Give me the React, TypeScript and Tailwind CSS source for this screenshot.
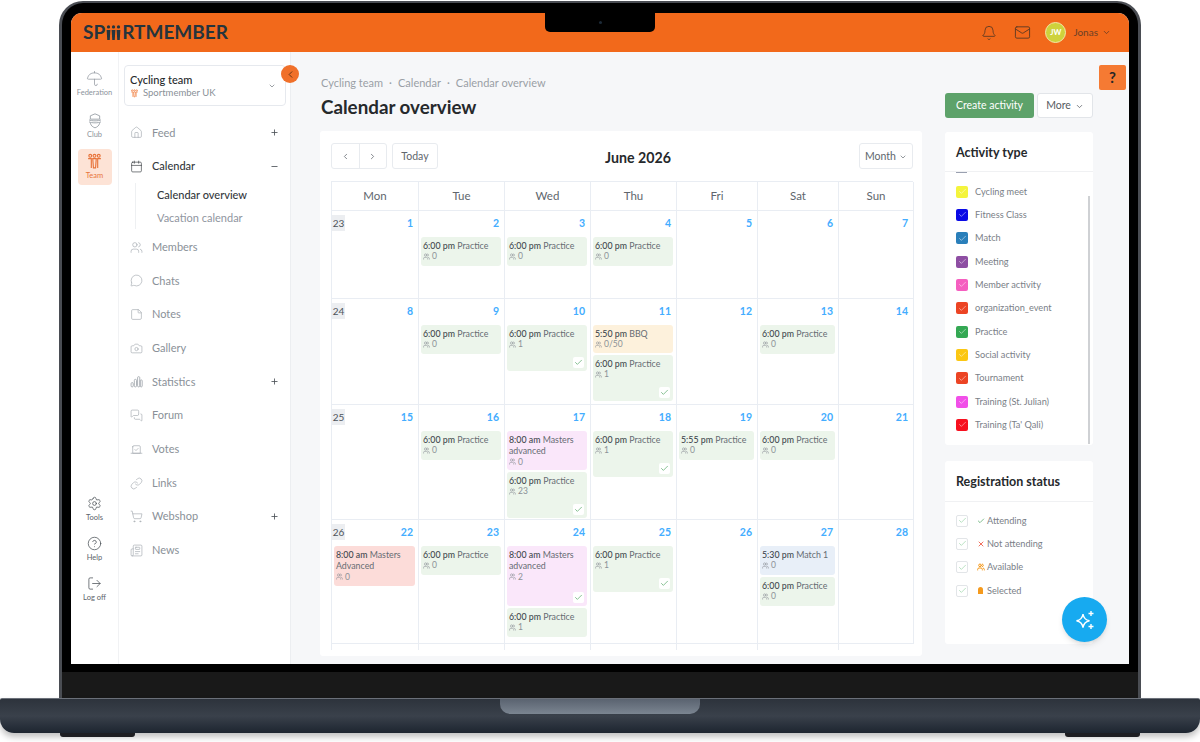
import {
  Bell, Mail, ChevronDown, ChevronLeft, ChevronRight, Plus, Minus, Home, Calendar, Users, MessageCircle,
  StickyNote, Camera, MessagesSquare, Vote, Link, ShoppingCart, Newspaper,
  Umbrella, Settings, CircleHelp, LogOut, Check, X,
} from 'lucide-react';

const Figures = ({ className }: { className?: string }) => (
  <svg viewBox="0 0 24 24" fill="none" stroke="currentColor" strokeWidth="1.6" className={className}>
    <circle cx="6" cy="4" r="2" /><circle cx="12" cy="4" r="2" /><circle cx="18" cy="4" r="2" />
    <path d="M3 8h4.500v13M21 8h-4.500v13M9.500 8h5l-1 13h-3z" />
  </svg>
);

const ClubIcon = ({ className }: { className?: string }) => (
  <svg viewBox="0 0 24 24" fill="none" stroke="currentColor" strokeWidth="1.200" className={className}>
    <path d="M12 2 5 5v5h14V5z" /><path d="M3 11c3 2 15 2 18 0M3 14c3 2 15 2 18 0" />
    <path d="M5 16c1 4 4 6 7 7 3-1 6-3 7-7" />
  </svg>
);

const StatsIcon = ({ className }: { className?: string }) => (
  <svg viewBox="0 0 24 24" fill="none" stroke="currentColor" strokeWidth="1.600" className={className}>
    <rect x="2" y="14" width="4" height="8" rx="2" /><rect x="8" y="8" width="4" height="14" rx="2" />
    <rect x="14" y="3" width="4" height="19" rx="2" /><rect x="19" y="9" width="3.500" height="13" rx="1.700" />
  </svg>
);

const Sparkle = () => (
  <svg viewBox="0 0 24 24" fill="none" stroke="white" strokeWidth="1.400" className="w-[24px] h-[24px]">
    <path d="M10 6c.6 4 2.400 6 6.500 6.800-4.100.8-5.900 2.800-6.500 6.800-.6-4-2.400-6-6.500-6.800C7.600 12 9.400 10 10 6z" />
    <path d="M18 3v5M15.500 5.500h5M18 16v5M15.500 18.500h5" />
  </svg>
);

const LogoMark = () => (
  <svg viewBox="0 0 24 24" className="w-[15px] h-[15px] mx-[1px] text-[#25343d]" fill="currentColor">
    <circle cx="4" cy="3" r="2.600" /><circle cx="12" cy="3" r="2.600" /><circle cx="20" cy="3" r="2.600" />
    <path d="M1 8h6l-1 16H2zM9 8h6l-1 16h-4zM17 8h6l-1 16h-4z" />
  </svg>
);

type NavItem = { label: string; icon: any; plus?: boolean };

const navTop: NavItem[] = [{ label: 'Feed', icon: Home, plus: true }];
const navRest: NavItem[] = [
  { label: 'Members', icon: Users },
  { label: 'Chats', icon: MessageCircle },
  { label: 'Notes', icon: StickyNote },
  { label: 'Gallery', icon: Camera },
  { label: 'Statistics', icon: StatsIcon, plus: true },
  { label: 'Forum', icon: MessagesSquare },
  { label: 'Votes', icon: Vote },
  { label: 'Links', icon: Link },
  { label: 'Webshop', icon: ShoppingCart, plus: true },
  { label: 'News', icon: Newspaper },
];

const activityTypes = [
  { label: 'Cycling meet', color: 'bg-[#f4f43c]' },
  { label: 'Fitness Class', color: 'bg-[#0a0ae6]' },
  { label: 'Match', color: 'bg-[#2a7fba]' },
  { label: 'Meeting', color: 'bg-[#8e4ea3]' },
  { label: 'Member activity', color: 'bg-[#f55fc0]' },
  { label: 'organization_event', color: 'bg-[#ec4424]' },
  { label: 'Practice', color: 'bg-[#34a853]' },
  { label: 'Social activity', color: 'bg-[#fbc713]' },
  { label: 'Tournament', color: 'bg-[#ec4424]' },
  { label: 'Training (St. Julian)', color: 'bg-[#f14fe8]' },
  { label: "Training (Ta' Qali)", color: 'bg-[#f7101f]' },
];

type Ev = { time: string; title: string; title2?: string; count: string; tone: string; h: string; done?: boolean };

const practice = (count: string, done?: boolean): Ev => ({
  time: '6:00 pm', title: 'Practice', count, tone: 'bg-[#ecf5eb]', h: done ? 'h-[46px]' : 'h-[29px]', done,
});

type Day = { d: number; evs?: Ev[] };
type Week = { wk: number; h: string; days: Day[] };

const weeks: Week[] = [
  {
    wk: 23, h: 'h-[88px]',
    days: [
      { d: 1 }, { d: 2, evs: [practice('0')] }, { d: 3, evs: [practice('0')] }, { d: 4, evs: [practice('0')] },
      { d: 5 }, { d: 6 }, { d: 7 },
    ],
  },
  {
    wk: 24, h: 'h-[106px]',
    days: [
      { d: 8 }, { d: 9, evs: [practice('0')] }, { d: 10, evs: [practice('1', true)] },
      { d: 11, evs: [{ time: '5:50 pm', title: 'BBQ', count: '0/50', tone: 'bg-[#fdf1dc]', h: 'h-[28px]' }, practice('1', true)] },
      { d: 12 }, { d: 13, evs: [practice('0')] }, { d: 14 },
    ],
  },
  {
    wk: 25, h: 'h-[115px]',
    days: [
      { d: 15 }, { d: 16, evs: [practice('0')] },
      { d: 17, evs: [{ time: '8:00 am', title: 'Masters', title2: 'advanced', count: '0', tone: 'bg-[#fae7fa]', h: 'h-[39px]' }, practice('23', true)] },
      { d: 18, evs: [practice('1', true)] },
      { d: 19, evs: [{ time: '5:55 pm', title: 'Practice', count: '0', tone: 'bg-[#ecf5eb]', h: 'h-[29px]' }] },
      { d: 20, evs: [practice('0')] }, { d: 21 },
    ],
  },
  {
    wk: 26, h: 'h-[124px]',
    days: [
      { d: 22, evs: [{ time: '8:00 am', title: 'Masters', title2: 'Advanced', count: '0', tone: 'bg-[#fcdcd9]', h: 'h-[40px]' }] },
      { d: 23, evs: [practice('0')] },
      { d: 24, evs: [{ time: '8:00 am', title: 'Masters', title2: 'advanced', count: '2', tone: 'bg-[#fae7fa]', h: 'h-[60px]', done: true }, practice('1')] },
      { d: 25, evs: [practice('1', true)] },
      { d: 26 },
      { d: 27, evs: [{ time: '5:30 pm', title: 'Match 1', count: '0', tone: 'bg-[#e8eff8]', h: 'h-[29px]' }, practice('0')] },
      { d: 28 },
    ],
  },
];

const EventCard = ({ ev }: { ev: Ev }) => (
  <div className={`${ev.tone} ${ev.h} ml-[2px] mr-[3px] rounded-[3px] pl-[2px] pr-[1px] pt-[2.500px] flex flex-col text-[8.800px] leading-[11.500px] text-[#666c73] overflow-hidden`}>
    <div className="whitespace-nowrap">
      <span className="font-medium text-[#43494f]">{ev.time}</span> {ev.title}
      {ev.title2 && <div>{ev.title2}</div>}
    </div>
    <div className="flex items-center gap-[2px] text-[8.500px] leading-[10px] text-[#8b9197]">
      <Users className="w-[7px] h-[7px]" strokeWidth={2} />
      {ev.count}
    </div>
    {ev.done && (
      <div className="mt-auto mb-[3px] mr-[2px] self-end w-[11px] h-[11px] bg-white rounded-[2px] flex items-center justify-center">
        <Check className="w-[9px] h-[9px] text-[#62ad72]" strokeWidth={2} />
      </div>
    )}
  </div>
);

const Rail = ({ icon, label, active }: { icon: any; label: string; active?: boolean }) => (
  <div className={`w-[34px] flex flex-col items-center rounded-[4px] ${active ? 'bg-[#fde3d6] text-[#e8743b] pt-[4px] pb-[3px]' : 'text-[#8d949c]'}`}>
    {icon}
    <span className="text-[7.500px] leading-[12px] whitespace-nowrap">{label}</span>
  </div>
);

const SideRow = ({ item }: { item: NavItem }) => {
  const Icon = item.icon;
  return (
    <div className="h-[33.700px] flex items-center text-[11px] text-[#8a9198]">
      <Icon className="w-[13px] h-[13px] text-[#a3a9af]" strokeWidth={1.2} />
      <span className="ml-[9px] flex-1">{item.label}</span>
      {item.plus && <Plus className="w-[9px] h-[9px] text-[#4a5056]" strokeWidth={2.2} />}
    </div>
  );
};

const App = () => {
  return (
    <div className="w-[1200px] h-[742px] bg-white overflow-hidden flex flex-col items-center font-['Lato',sans-serif]">
      {/* lid */}
      <div className="mt-px w-[1082px] h-[697px] shrink-0 rounded-t-[24px] bg-black border-x-[3px] border-t-[2px] border-[#4a4d53] pt-[10px] flex flex-col overflow-hidden">
        <div className="mx-[9px] h-[651px] shrink-0 bg-[#f6f7f9] rounded-t-[11px] overflow-hidden relative flex flex-col">
          {/* top bar */}
          <div className="h-[39px] shrink-0 bg-[#f2691b] flex items-center pl-[12px] pr-[18px]">
            <div className="flex items-center text-[19px] font-bold text-[#25343d]">
              SP<LogoMark />RTMEMBER
            </div>
            <div className="ml-auto flex items-center text-[#5c3a24]">
              <Bell className="w-[16px] h-[16px]" strokeWidth={1.3} />
              <Mail className="ml-[17px] w-[17px] h-[17px]" strokeWidth={1.3} />
              <div className="ml-[14px] w-[21px] h-[21px] rounded-full bg-[#ced23c] border border-[#f0e9a8] text-white text-[7.500px] font-bold flex items-center justify-center">JW</div>
              <span className="ml-[7px] text-[10px] text-[#6a4026]">Jonas</span>
              <ChevronDown className="ml-[4px] w-[9px] h-[9px]" />
            </div>
          </div>
          {/* notch */}
          <div className="absolute left-[474px] top-0 w-[110px] h-[19px] bg-black rounded-b-[5px] flex items-center justify-center">
            <div className="w-[3px] h-[3px] rounded-full bg-[#1c2a38]" />
          </div>

          <div className="flex-1 flex min-h-0 relative">
            {/* rail */}
            <div className="w-[48px] shrink-0 bg-white border-r border-[#f1f2f4] flex flex-col items-center pt-[18px]">
              <Rail icon={<Umbrella className="w-[17px] h-[17px]" strokeWidth={1} />} label="Federation" />
              <div className="mt-[13px]">
                <Rail icon={<ClubIcon className="w-[16px] h-[17px]" />} label="Club" />
              </div>
              <div className="mt-[8px]">
                <Rail active icon={<Figures className="w-[17px] h-[17px]" />} label="Team" />
              </div>
              <div className="mt-auto mb-[60px] flex flex-col gap-[12px] items-center text-[#4a5056]">
                {[
                  { label: 'Tools', Icon: Settings },
                  { label: 'Help', Icon: CircleHelp },
                  { label: 'Log off', Icon: LogOut },
                ].map(({ label, Icon }) => (
                  <div key={label} className="flex flex-col items-center">
                    <Icon className="w-[15px] h-[15px]" strokeWidth={1.2} />
                    <span className="text-[7.500px] leading-[13px] text-[#5d646b]">{label}</span>
                  </div>
                ))}
              </div>
            </div>

            {/* sidebar */}
            <div className="w-[172px] shrink-0 bg-white pl-[5px] pr-[4px] pt-[13px] border-r border-[#eceef1] relative">
              <div className="h-[41px] border border-[#e6e9ee] rounded-[4px] pl-[5px] pr-[6px] pt-[7px] flex">
                <div className="flex-1">
                  <div className="text-[11px] leading-[14px] font-medium text-[#26292c]">Cycling team</div>
                  <div className="flex items-center text-[9.500px] leading-[12px] text-[#8a9198]">
                    <Figures className="w-[9px] h-[9px] text-[#f0702a] mr-[4px]" />
                    Sportmember UK
                  </div>
                </div>
                <ChevronDown className="mt-[9px] mr-[3px] w-[8px] h-[8px] text-[#6b7177]" />
              </div>
              <div className="mt-[10px] pl-[6px] pr-[7px]">
                {navTop.map((it) => <SideRow key={it.label} item={it} />)}
                <div className="h-[33.700px] flex items-center text-[11px] font-medium text-[#33383c]">
                  <Calendar className="w-[13px] h-[13px]" strokeWidth={1.2} />
                  <span className="ml-[9px] flex-1">Calendar</span>
                  <Minus className="w-[9px] h-[9px] text-[#4a5056]" strokeWidth={2.2} />
                </div>
                <div className="ml-[5px] h-[46px] border-l border-[#eef0f2] pl-[21px] text-[11px] leading-[23px] mb-[1px]">
                  <div className="font-medium text-[#33383c] whitespace-nowrap">Calendar overview</div>
                  <div className="text-[#9096a0] whitespace-nowrap">Vacation calendar</div>
                </div>
                {navRest.map((it) => <SideRow key={it.label} item={it} />)}
              </div>
              {/* collapse */}
              <div className="absolute -right-[9px] top-[13px] w-[18px] h-[18px] rounded-full bg-[#f0702a] flex items-center justify-center text-[#5c3014]">
                <ChevronLeft className="w-[11px] h-[11px]" strokeWidth={2} />
              </div>
            </div>

            {/* main */}
            <div className="flex-1 min-w-0 pl-[29px] pr-[36px] pt-[24px] relative">
              <div className="absolute right-[3px] top-[13px] w-[27px] h-[25px] rounded-[2px] bg-[#f57a33] flex items-center justify-center text-[15px] font-bold text-[#262626]">?</div>
              <div className="flex items-end justify-between h-[42px]">
                <div className="pl-px -mb-px">
                  <div className="text-[11px] leading-[14px] text-[#9a9fa6] flex gap-[6px]">
                    <span>Cycling team</span><span>·</span><span>Calendar</span><span>·</span><span>Calendar overview</span>
                  </div>
                  <div className="mt-[5px] text-[18.800px] leading-[24px] font-bold text-[#26292c]">Calendar overview</div>
                </div>
                <div className="flex gap-[3px]">
                  <div className="w-[89px] h-[25px] pt-px rounded-[3px] bg-[#5da26a] text-white text-[10.500px] flex items-center justify-center">Create activity</div>
                  <div className="w-[56px] h-[25px] pt-px rounded-[3px] bg-white border border-[#e2e5e9] text-[10.500px] text-[#555b61] flex items-center justify-center gap-[4px]">
                    More <ChevronDown className="w-[9px] h-[9px]" />
                  </div>
                </div>
              </div>

              <div className="mt-[13px] flex gap-[23px] items-start">
                {/* calendar */}
                <div className="w-[602px] h-[525px] shrink-0 bg-white rounded-[3px] pl-[11px] pr-[9px] pt-[12px] overflow-hidden">
                  <div className="flex items-center h-[26px]">
                    <div className="flex w-[56px] h-[26px] border border-[#e8ebef] rounded-[3px] text-[#5d646b]">
                      <div className="flex-1 border-r border-[#e8ebef] flex items-center justify-center"><ChevronLeft className="w-[9px] h-[9px]" strokeWidth={2} /></div>
                      <div className="flex-1 flex items-center justify-center"><ChevronRight className="w-[9px] h-[9px]" strokeWidth={2} /></div>
                    </div>
                    <div className="ml-[5px] w-[46px] h-[26px] pt-px border border-[#e8ebef] rounded-[3px] text-[10.500px] text-[#60666d] flex items-center justify-center">Today</div>
                    <div className="flex-1 text-center pr-[21px] pt-[3px] text-[14.200px] font-bold text-[#26292c]">June 2026</div>
                    <div className="w-[54px] h-[26px] pt-px border border-[#e8ebef] rounded-[3px] text-[10.500px] text-[#60666d] flex items-center justify-center gap-[3px]">
                      Month <ChevronDown className="w-[8px] h-[8px]" />
                    </div>
                  </div>
                  <div className="mt-[12px] border-t border-l border-[#e9edf3] w-[582px]">
                    <div className="grid grid-cols-[87px_86px_86px_86px_81px_81px_75px] h-[29px]">
                      {['Mon', 'Tue', 'Wed', 'Thu', 'Fri', 'Sat', 'Sun'].map((d) => (
                        <div key={d} className="border-r border-b border-[#e9edf3] text-[11.500px] text-[#60666d] flex items-center justify-center">{d}</div>
                      ))}
                    </div>
                    {weeks.map((w) => (
                      <div key={w.wk} className={`grid grid-cols-[87px_86px_86px_86px_81px_81px_75px] ${w.h}`}>
                        {w.days.map((day, i) => (
                          <div key={day.d} className="border-r border-b border-[#e9edf3] flex flex-col gap-[2px] min-w-0">
                            <div className="h-[24px] shrink-0 flex items-start justify-between">
                              {i === 0 ? (
                                <span className="w-[13px] h-[16px] mt-[4px] bg-[#eceef1] text-[10px] leading-[16px] text-[#4e545a] text-center">{w.wk}</span>
                              ) : <span />}
                              <span className="mt-[6px] mr-[5px] text-[10.500px] leading-[12px] font-bold text-[#43adff]">{day.d}</span>
                            </div>
                            {day.evs?.map((ev, n) => <EventCard key={n} ev={ev} />)}
                          </div>
                        ))}
                      </div>
                    ))}
                    <div className="grid grid-cols-[87px_86px_86px_86px_81px_81px_75px] h-[6px] -ml-px">
                      {[0, 1, 2, 3, 4, 5, 6].map((n) => (
                        <div key={n} className={n === 0 ? '' : 'border-l border-[#e9edf3]'} />
                      ))}
                    </div>
                  </div>
                </div>

                {/* right column */}
                <div className="mt-px w-[148px] shrink-0 flex flex-col gap-[16px]">
                  <div className="h-[313px] bg-white rounded-[3px] relative overflow-hidden">
                    <div className="h-[40px] pt-[3px] border-b border-[#f0f1f3] pl-[11px] flex items-center text-[12.500px] font-bold text-[#26292c]">Activity type</div>
                    <div className="absolute right-[3px] top-[64px] bottom-px w-[2px] bg-[#cfd1d4]" />
                    <div className="ml-[11px] w-[11px] h-px bg-[#9aa0b0]" />
                    <div className="pl-[11px] pt-[7px]">
                      {activityTypes.map((t) => (
                        <div key={t.label} className="h-[23.330px] flex items-center text-[9.200px] text-[#7a8087] whitespace-nowrap">
                          <div className={`${t.color} w-[12px] h-[12px] rounded-[2px] flex items-center justify-center mr-[7px]`}>
                            <Check className="w-[9px] h-[9px] text-white/80" strokeWidth={1.6} />
                          </div>
                          {t.label}
                        </div>
                      ))}
                    </div>
                  </div>
                  <div className="h-[183px] bg-white rounded-[3px]">
                    <div className="h-[41px] pt-[2px] border-b border-[#f0f1f3] pl-[11px] flex items-center text-[12.500px] font-bold text-[#26292c]">Registration status</div>
                    <div className="pl-[11px] pt-[7px]">
                      {[
                        { label: 'Attending', mark: <Check className="w-[8px] h-[8px] text-[#62ad72]" strokeWidth={2.4} /> },
                        { label: 'Not attending', mark: <X className="w-[8px] h-[8px] text-[#ee5a44]" strokeWidth={2.6} /> },
                        { label: 'Available', mark: <Users className="w-[8px] h-[8px] text-[#f59a1d]" strokeWidth={3} /> },
                        { label: 'Selected', mark: <div className="w-[5px] h-[7px] rounded-t-full rounded-b-[2px] bg-[#f59a1d]" /> },
                      ].map((s) => (
                        <div key={s.label} className="h-[23.330px] flex items-center text-[9.200px] text-[#7a8087]">
                          <div className="w-[12px] h-[12px] border border-[#e2e5e8] rounded-[2px] flex items-center justify-center mr-[8px]">
                            <Check className="w-[9px] h-[9px] text-[#8ccf9a]" strokeWidth={1.6} />
                          </div>
                          <div className="w-[9px] flex items-center justify-center mr-[2px]">{s.mark}</div>
                          {s.label}
                        </div>
                      ))}
                    </div>
                  </div>
                </div>
              </div>

              {/* assistant button */}
              <div className="absolute right-[22px] top-[545px] w-[45px] h-[45px] rounded-full bg-[#17aaf0] shadow-md flex items-center justify-center">
                <Sparkle />
              </div>
            </div>
          </div>
        </div>
        {/* chin */}
        <div className="h-[8px] shrink-0 bg-black" />
        <div className="flex-1 bg-[#191919]" />
      </div>

      {/* base */}
      <div className="w-[1200px] h-[35px] shrink-0 rounded-b-[14px] rounded-t-[2px] bg-gradient-to-b from-[#2d333c] via-[#3a414b] to-[#1d2530] border-t border-[#6b7079] flex justify-center shadow-[0_4px_6px_rgba(0,0,0,0.25)]">
        <div className="w-[200px] h-[15px] rounded-b-[10px] bg-gradient-to-b from-[#5a6370] to-[#7b8591]" />
      </div>
      <div className="w-[1080px] h-[4px] shrink-0 flex justify-between">
        <div className="w-[75px] bg-[#1e1e22] rounded-b-[3px]" />
        <div className="w-[75px] bg-[#1e1e22] rounded-b-[3px]" />
      </div>
    </div>
  );
};

export default App;
